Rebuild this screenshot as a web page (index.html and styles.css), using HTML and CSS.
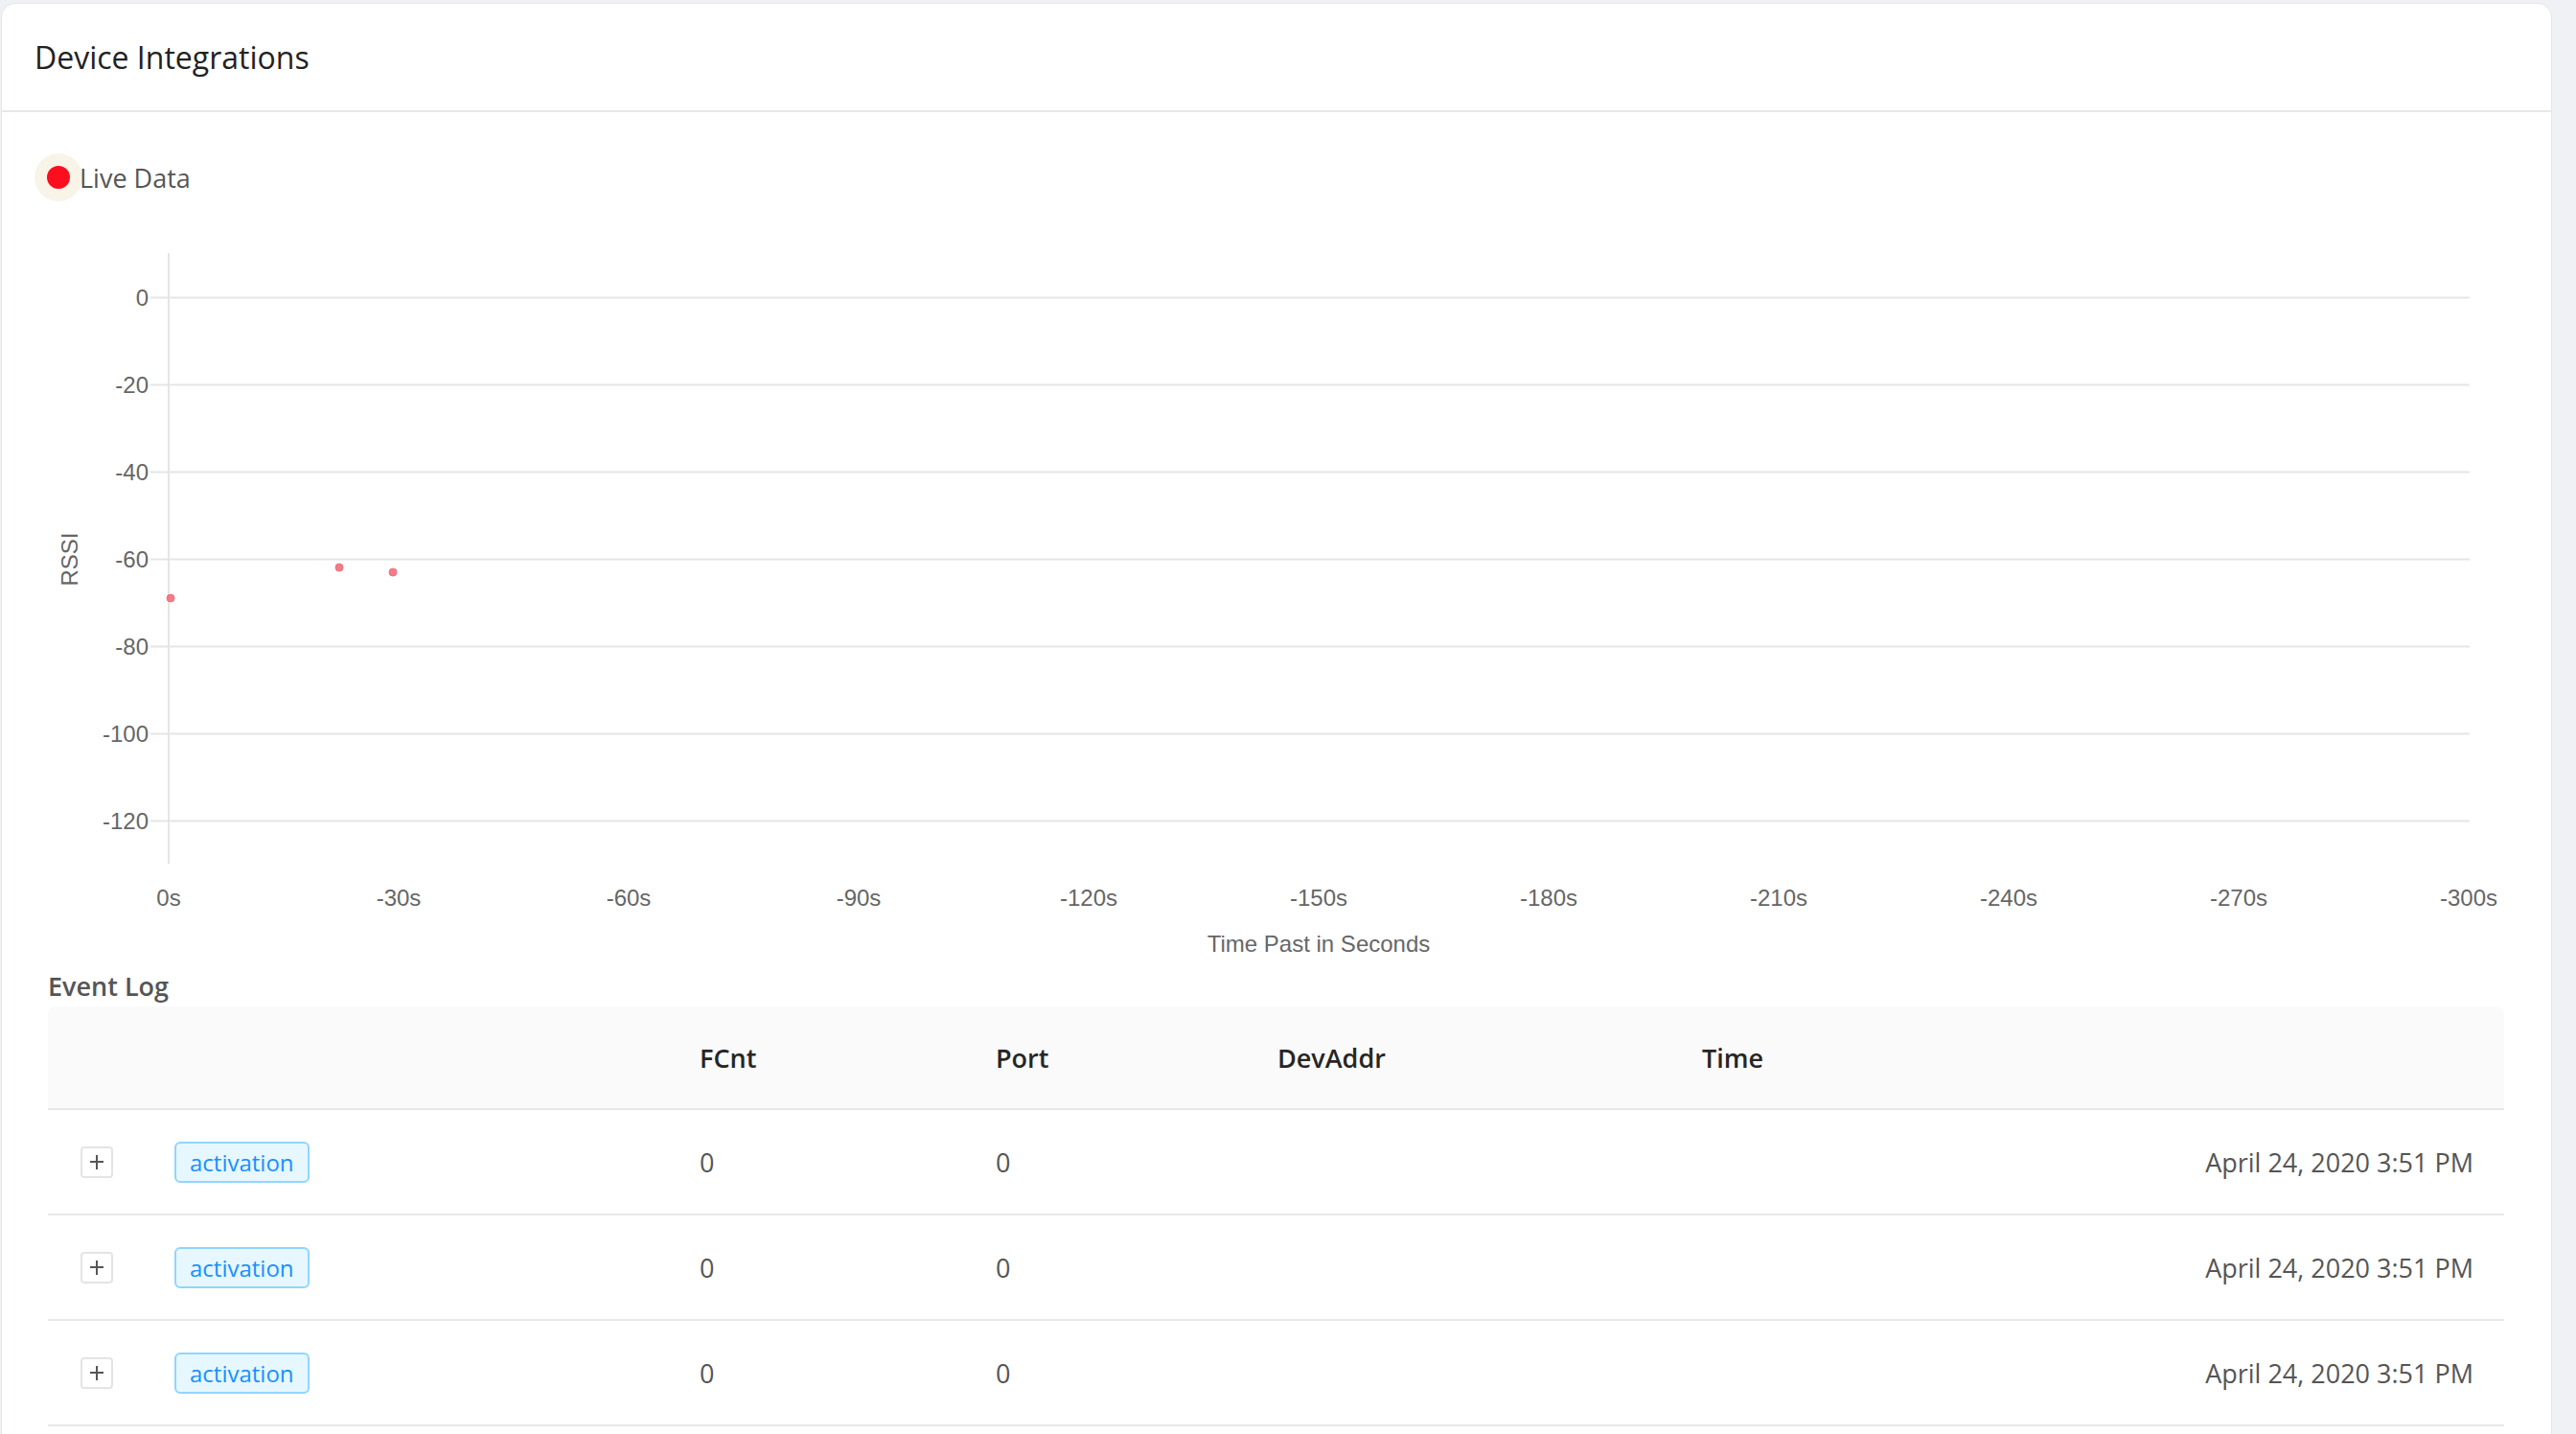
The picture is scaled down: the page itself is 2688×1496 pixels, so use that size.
FILE: index.html
```html
<!DOCTYPE html>
<html lang="en">
<head>
<meta charset="utf-8">
<title>Device Integrations</title>
<link rel="stylesheet" href="styles.css">
</head>
<body>
<div class="card">
  <div class="card-header">
    <h1 class="card-title">Device Integrations</h1>
  </div>
  <div class="card-body">
    <div class="live">
      <span class="live-dot"></span>
      <span class="live-label">Live Data</span>
    </div>
    <svg class="chart" width="2592" height="801" viewBox="0 0 2592 801" xmlns="http://www.w3.org/2000/svg">
      <g class="grid">
        <line x1="121" y1="100.5" x2="2541" y2="100.5"/>
        <line x1="121" y1="191.5" x2="2541" y2="191.5"/>
        <line x1="121" y1="282.5" x2="2541" y2="282.5"/>
        <line x1="121" y1="373.5" x2="2541" y2="373.5"/>
        <line x1="121" y1="464.5" x2="2541" y2="464.5"/>
        <line x1="121" y1="555.5" x2="2541" y2="555.5"/>
        <line x1="121" y1="646.5" x2="2541" y2="646.5"/>
        <line x1="140" y1="54" x2="140" y2="691"/>
      </g>
      <g class="ylabels">
        <text x="119" y="109">0</text>
        <text x="119" y="200">-20</text>
        <text x="119" y="291">-40</text>
        <text x="119" y="382">-60</text>
        <text x="119" y="473">-80</text>
        <text x="119" y="564">-100</text>
        <text x="119" y="655">-120</text>
      </g>
      <g class="xlabels">
        <text x="140" y="734.5">0s</text>
        <text x="380" y="734.5">-30s</text>
        <text x="620" y="734.5">-60s</text>
        <text x="860" y="734.5">-90s</text>
        <text x="1100" y="734.5">-120s</text>
        <text x="1340" y="734.5">-150s</text>
        <text x="1580" y="734.5">-180s</text>
        <text x="1820" y="734.5">-210s</text>
        <text x="2060" y="734.5">-240s</text>
        <text x="2300" y="734.5">-270s</text>
        <text x="2540" y="734.5">-300s</text>
        <text x="1340" y="782.5">Time Past in Seconds</text>
      </g>
      <text class="ytitle" transform="translate(45 373.5) rotate(-90)">RSSI</text>
      <g class="points">
        <circle cx="142" cy="414" r="4"/>
        <circle cx="318" cy="382" r="4"/>
        <circle cx="374" cy="387" r="4"/>
      </g>
    </svg>

    <section class="events">
      <h2 class="events-title">Event Log</h2>
      <div class="table">
        <div class="row head">
          <div class="cell"></div>
          <div class="cell"></div>
          <div class="cell">FCnt</div>
          <div class="cell">Port</div>
          <div class="cell">DevAddr</div>
          <div class="cell">Time</div>
        </div>
        <div class="row">
          <div class="cell expand-cell"><span class="expand"></span></div>
          <div class="cell"><span class="tag">activation</span></div>
          <div class="cell">0</div>
          <div class="cell">0</div>
          <div class="cell"></div>
          <div class="cell time">April 24, 2020 3:51 PM</div>
        </div>
        <div class="row">
          <div class="cell expand-cell"><span class="expand"></span></div>
          <div class="cell"><span class="tag">activation</span></div>
          <div class="cell">0</div>
          <div class="cell">0</div>
          <div class="cell"></div>
          <div class="cell time">April 24, 2020 3:51 PM</div>
        </div>
        <div class="row">
          <div class="cell expand-cell"><span class="expand"></span></div>
          <div class="cell"><span class="tag">activation</span></div>
          <div class="cell">0</div>
          <div class="cell">0</div>
          <div class="cell"></div>
          <div class="cell time">April 24, 2020 3:51 PM</div>
        </div>
      </div>
    </section>
  </div>
</div>
</body>
</html>
```

FILE: styles.css
```css
* { box-sizing: border-box; }

html, body {
  margin: 0;
  background: #f0f1f5;
}

body {
  padding: 3px 25px 0 1px;
  font-family: "Open Sans", "Liberation Sans", sans-serif;
  color: #555;
  overflow: hidden;
}

.card {
  background: #fff;
  border: 1px solid #e6e6e6;
  border-radius: 15px 15px 0 0;
}

.card-header {
  height: 113px;
  padding: 0 34px;
  display: flex;
  align-items: center;
  border-bottom: 2px solid #e8e8e8;
}

.card-title {
  margin: 0;
  font-size: 32px;
  font-weight: 500;
  color: #222;
  line-height: 1.3;
}

.card-body {
  padding: 43px 34px 60px 34px;
}

.live {
  height: 50px;
  display: flex;
  align-items: center;
  padding-left: 13px;
}

.live-dot {
  width: 24px;
  height: 24px;
  border-radius: 50%;
  background: #fb0f1f;
  box-shadow: 0 0 0 13px #f8f4e8;
}

.live-label {
  margin-left: 10px;
  font-size: 27px;
  color: #555;
  line-height: 1;
}

.chart {
  display: block;
}

.chart .grid line {
  stroke: #e5e5e5;
  stroke-width: 2;
}

.chart text {
  font-family: "Liberation Sans", Arial, sans-serif;
  font-size: 24px;
  fill: #666;
}

.chart .ylabels text { text-anchor: end; }
.chart .xlabels text { text-anchor: middle; }
.chart .ytitle { text-anchor: middle; }

.chart .points circle {
  fill: rgba(245, 100, 115, 0.85);
  stroke: #f07080;
  stroke-width: 1;
}

.events {
  padding: 0 15px 0 14px;
}

.events-title {
  margin: 0 0 3px 0;
  font-size: 27px;
  line-height: 36px;
  font-weight: 600;
  color: #555;
}

.row {
  display: grid;
  grid-template-columns: 132px 548px 309px 294px 443px 1fr;
  align-items: center;
  height: 110px;
  border-bottom: 2px solid #e8e8e8;
  font-size: 27px;
  color: #555;
}

.row.head {
  height: 108px;
  background: #fafafa;
  border-radius: 8px 8px 0 0;
  font-weight: 600;
  color: #262626;
}

.cell {
  white-space: nowrap;
}

.expand-cell {
  padding-left: 34px;
  display: flex;
  align-items: center;
}

.expand {
  position: relative;
  width: 34px;
  height: 33px;
  border: 2px solid #e4e4e4;
  border-radius: 4px;
  background: #fff;
}

.expand::before,
.expand::after {
  content: "";
  position: absolute;
  background: #555;
}

.expand::before {
  left: 8px;
  right: 8px;
  top: 13.5px;
  height: 2px;
}

.expand::after {
  top: 7px;
  bottom: 7px;
  left: 14px;
  width: 2px;
}

.tag {
  display: inline-block;
  height: 43px;
  line-height: 39px;
  padding: 0 14px;
  font-size: 24px;
  color: #1890ff;
  background: #e6f7ff;
  border: 2px solid #91d5ff;
  border-radius: 6px;
}

.time {
  text-align: right;
  padding-right: 32px;
}
```
